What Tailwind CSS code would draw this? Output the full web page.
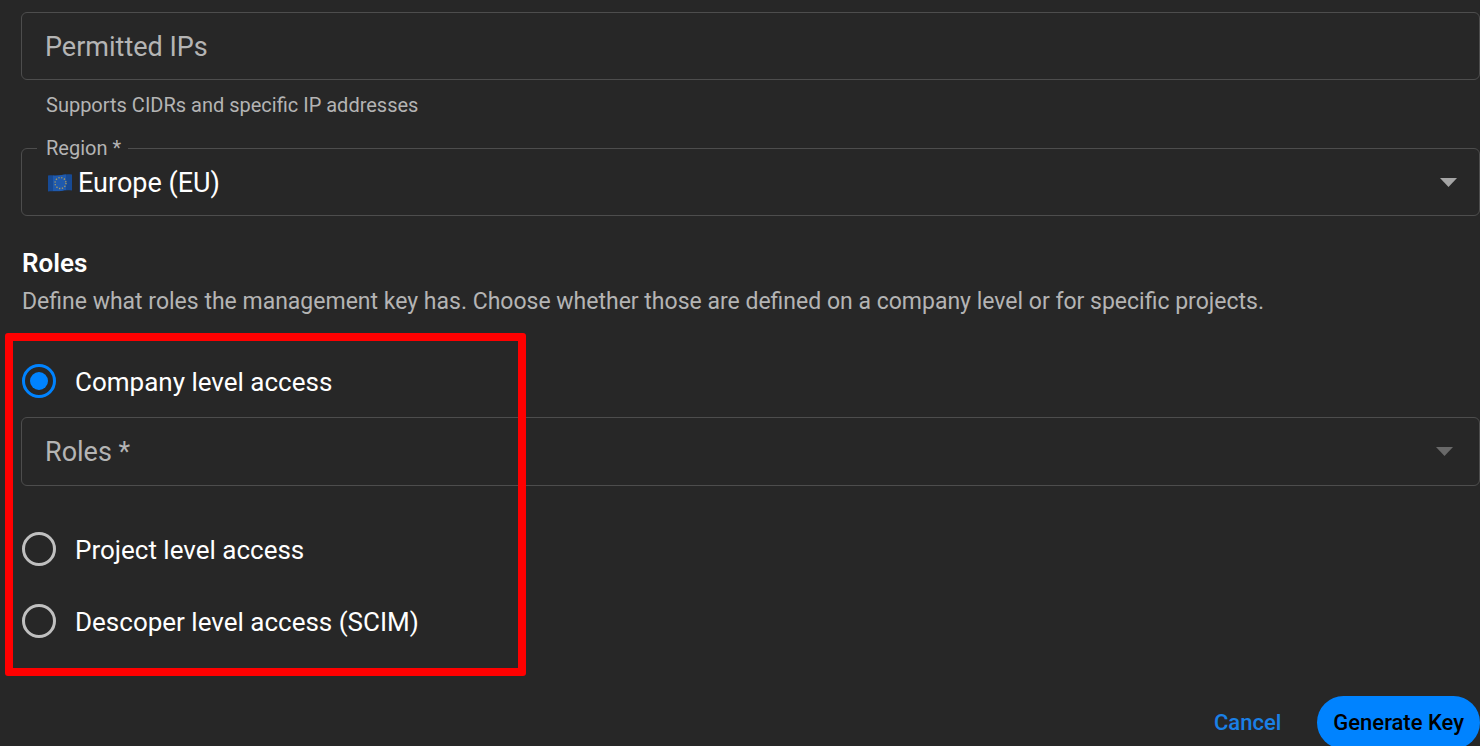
<!DOCTYPE html>
<html lang="en" class="bg-[#272727]">
<head>
  <meta charset="UTF-8" />
  <meta name="viewport" content="width=device-width, initial-scale=1.0" />
  <title>Generate Management Key</title>
  <script src="https://cdn.jsdelivr.net/npm/@tailwindcss/browser@4"></script>
</head>
<body class="relative h-screen overflow-hidden bg-[#272727] font-['Roboto',sans-serif] text-white">
  <form class="pt-3 pl-[21px]">
    <!-- Permitted IPs -->
    <input type="text" id="ips" aria-label="Permitted IPs" aria-describedby="ips-help" placeholder="Permitted IPs" class="block h-[68px] w-full rounded-md border border-[#4d4d4d] bg-transparent px-[23px] pt-[2px] text-[27px] placeholder:text-[#b4b4b4] focus:outline-none focus:border-[#0083ff]">
    <p id="ips-help" class="mt-3 px-[25px] text-[20px] leading-[26px] text-[#b4b4b4]">Supports CIDRs and specific IP addresses</p>

    <!-- Region -->
    <fieldset class="relative mt-[17px] rounded-md border border-[#4d4d4d] pb-[10px]">
      <legend class="ml-[15px] pr-[7px] pl-[9px] text-[20px] leading-[26px] text-[#b4b4b4]"><label for="region">Region *</label></legend>
      <div class="flex items-center gap-[6px] pl-[26px]">
        <svg class="h-[18px] w-6 shrink-0" viewBox="0 0 24 18" aria-hidden="true">
          <path d="M0 1.5C5 .5 8 2 12 1.2S20 0 24 .5V16.5C20 16 17 16 13 17S5 16.500 0 17.500Z" fill="#174a94" />
          <path d="M5 1.500C8 2 10 1.500 12 1.200L18 .5V16C16 16 15 16.500 13 17L5 17Z" fill="#1f5aad" />
          <circle cx="12.500" cy="9" r="5.500" fill="none" stroke="#a99a62" stroke-width="1.300" stroke-dasharray="1.300 1.580" />
        </svg>
        <select id="region" class="h-11 flex-1 appearance-none bg-transparent text-[27px] focus:outline-none">
          <option>Europe (EU)</option>
        </select>
      </div>
      <svg class="pointer-events-none absolute right-[22px] top-[17px] h-[9px] w-[17px]" viewBox="0 0 17 9" aria-hidden="true"><path d="M0 0H17L8.500 9Z" fill="#a5a5a5" /></svg>
    </fieldset>

    <!-- Roles -->
    <div class="pl-px">
      <h2 class="mt-[31px] text-[26px] font-semibold leading-8">Roles</h2>
      <p class="mt-[5px] text-[23px] leading-9 text-[#b4b4b4]">Define what roles the management key has. Choose whether those are defined on a company level or for specific projects.</p>
    </div>

    <div class="mt-[25px]">
      <label class="flex h-[72px] items-center gap-[19px] pl-px text-[26px]">
        <input type="radio" name="level" value="company" checked class="grid size-[34px] appearance-none place-content-center rounded-full border-[3px] border-[#c0c0c0] checked:border-[#0083ff] checked:before:size-[18px] checked:before:rounded-full checked:before:bg-[#0083ff]">
        <span class="pt-[2px]">Company level access</span>
      </label>
      <div class="relative">
        <select id="roles" aria-label="Roles" required class="block h-[69px] w-full appearance-none rounded-md border border-[#4d4d4d] bg-transparent px-[23px] pt-[2px] text-[27px] text-[#b4b4b4] focus:outline-none">
          <option value="">Roles *</option>
        </select>
        <svg class="pointer-events-none absolute right-[27px] top-[30px] h-[9px] w-[17px]" viewBox="0 0 17 9" aria-hidden="true"><path d="M0 0H17L8.500 9Z" fill="#696969" /></svg>
      </div>
      <label class="mt-[27px] flex h-[72px] items-center gap-[19px] pl-px text-[26px]">
        <input type="radio" name="level" value="project" class="grid size-[34px] appearance-none place-content-center rounded-full border-[3px] border-[#c0c0c0] checked:border-[#0083ff] checked:before:size-[18px] checked:before:rounded-full checked:before:bg-[#0083ff]">
        <span class="pt-[2px]">Project level access</span>
      </label>
      <label class="flex h-[72px] items-center gap-[19px] pl-px text-[26px]">
        <input type="radio" name="level" value="descoper" class="grid size-[34px] appearance-none place-content-center rounded-full border-[3px] border-[#c0c0c0] checked:border-[#0083ff] checked:before:size-[18px] checked:before:rounded-full checked:before:bg-[#0083ff]">
        <span class="pt-[2px]">Descoper level access (SCIM)</span>
      </label>
    </div>

    <div class="mt-[39px] flex justify-end gap-5">
      <button type="button" class="h-[53px] px-4 text-[22px] font-medium text-[#1a80e6]">Cancel</button>
      <button type="submit" class="h-[53px] rounded-full bg-[#0083ff] px-4 text-[22px] font-medium text-black">Generate Key</button>
    </div>
  </form>

  <!-- highlight around the access levels -->
  <div class="pointer-events-none absolute left-[5px] top-[333px] h-[343px] w-[521px] rounded-[3px] border-8 border-[#ff0000]"></div>
</body>
</html>
